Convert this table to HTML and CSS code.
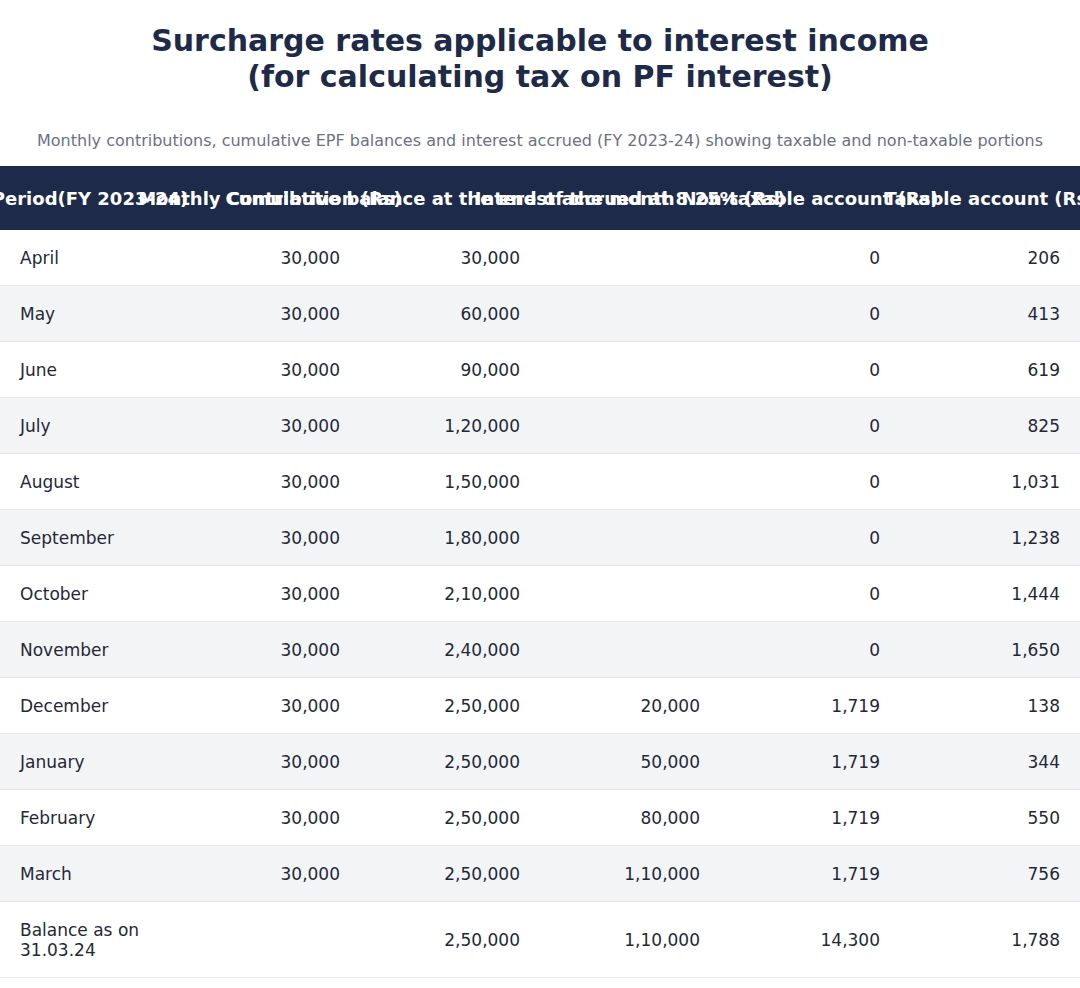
FILE: index.html
```html
<!DOCTYPE html>
<html lang="en">
<head>
<meta charset="utf-8">
<title>Surcharge rates applicable to interest income</title>
<link rel="stylesheet" href="styles.css">
</head>
<body>
<div class="page">
  <h1 class="title">Surcharge rates applicable to interest income<br>(for calculating tax on PF interest)</h1>
  <p class="subtitle">Monthly contributions, cumulative EPF balances and interest accrued (FY 2023-24) showing taxable and non-taxable portions</p>
  <table class="data">
    <thead>
      <tr>
        <th><div class="th-in"><span>Period(FY 2023-24)</span></div></th>
        <th><div class="th-in"><span>Monthly Contribution (Rs)</span></div></th>
        <th><div class="th-in"><span>Cumulative balance at the end of the month</span></div></th>
        <th><div class="th-in"><span>Interest accrued at 8.25% (Rs)</span></div></th>
        <th><div class="th-in"><span>Non-taxable account (Rs)</span></div></th>
        <th><div class="th-in"><span>Taxable account (Rs)</span></div></th>
      </tr>
    </thead>
    <tbody>
      <tr><td>April</td><td>30,000</td><td>30,000</td><td></td><td>0</td><td>206</td></tr>
      <tr><td>May</td><td>30,000</td><td>60,000</td><td></td><td>0</td><td>413</td></tr>
      <tr><td>June</td><td>30,000</td><td>90,000</td><td></td><td>0</td><td>619</td></tr>
      <tr><td>July</td><td>30,000</td><td>1,20,000</td><td></td><td>0</td><td>825</td></tr>
      <tr><td>August</td><td>30,000</td><td>1,50,000</td><td></td><td>0</td><td>1,031</td></tr>
      <tr><td>September</td><td>30,000</td><td>1,80,000</td><td></td><td>0</td><td>1,238</td></tr>
      <tr><td>October</td><td>30,000</td><td>2,10,000</td><td></td><td>0</td><td>1,444</td></tr>
      <tr><td>November</td><td>30,000</td><td>2,40,000</td><td></td><td>0</td><td>1,650</td></tr>
      <tr><td>December</td><td>30,000</td><td>2,50,000</td><td>20,000</td><td>1,719</td><td>138</td></tr>
      <tr><td>January</td><td>30,000</td><td>2,50,000</td><td>50,000</td><td>1,719</td><td>344</td></tr>
      <tr><td>February</td><td>30,000</td><td>2,50,000</td><td>80,000</td><td>1,719</td><td>550</td></tr>
      <tr><td>March</td><td>30,000</td><td>2,50,000</td><td>1,10,000</td><td>1,719</td><td>756</td></tr>
      <tr class="total"><td>Balance as on 31.03.24</td><td></td><td>2,50,000</td><td>1,10,000</td><td>14,300</td><td>1,788</td></tr>
    </tbody>
  </table>
</div>
</body>
</html>
```

FILE: styles.css
```css
html, body {
  margin: 0;
  padding: 0;
  background: #ffffff;
}

body {
  font-family: "DejaVu Sans", sans-serif;
  color: #1f2937;
  overflow: hidden;
}

.page {
  width: 1080px;
  padding-top: 23px;
}

.title {
  margin: 0;
  text-align: center;
  font-size: 30px;
  line-height: 36px;
  font-weight: bold;
  color: #1e2a4a;
}

.subtitle {
  margin: 35px 0 0;
  text-align: center;
  font-size: 16px;
  line-height: 22px;
  color: #6b7280;
}

.data {
  margin-top: 14px;
  width: 1080px;
  table-layout: fixed;
  border-collapse: collapse;
  font-size: 17px;
}

.data th {
  background: #1e2a4a;
  color: #ffffff;
  font-weight: bold;
  font-size: 18px;
  height: 64px;
  padding: 0;
  overflow: visible;
}

.th-in {
  display: flex;
  justify-content: center;
  white-space: nowrap;
  width: 100%;
}

.th-in span {
  flex: none;
}

.data td {
  height: 55px;
  padding: 0 20px;
  text-align: right;
  border-bottom: 1px solid #e5e7eb;
  color: #1f2937;
}

.data td:first-child {
  text-align: left;
}

.data tbody tr:nth-child(even) td {
  background: #f3f4f6;
}

.data tr.total td {
  height: 75px;
  line-height: 20px;
}
```
